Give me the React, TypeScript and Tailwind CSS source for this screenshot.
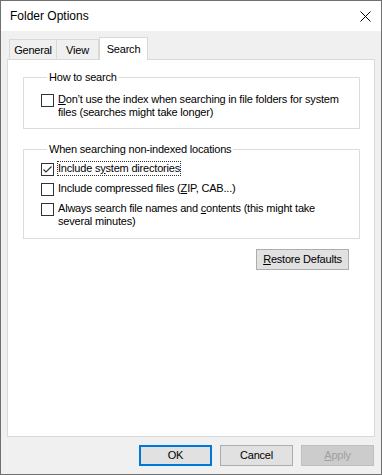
import { useState } from 'react';

type option = {
  id: string;
  label: React.ReactNode;
  checked: boolean;
  focused?: boolean;
};

const Checkbox = ({ checked }: { checked: boolean }) => (
  <span className="mt-[1px] flex h-[13px] w-[13px] shrink-0 items-center justify-center border border-[#333333] bg-white">
    {checked && (
      <svg width="11" height="11" viewBox="0 0 11 11">
        <path d="M1.5 5.5 L4 8 L9.5 2.5" fill="none" stroke="#333333" strokeWidth="1.2" />
      </svg>
    )}
  </span>
);

const Option = ({ option, onToggle }: { option: option; onToggle: () => void }) => (
  <div className="flex cursor-default items-start gap-[4px]" onClick={onToggle}>
    <Checkbox checked={option.checked} />
    <span
      className={
        option.focused
          ? 'outline outline-1 outline-dotted outline-[#333333] outline-offset-0'
          : ''
      }
    >
      {option.label}
    </span>
  </div>
);

const Button = ({
  children,
  variant = 'default',
  className = '',
}: {
  children: React.ReactNode;
  variant?: 'default' | 'focused' | 'disabled';
  className?: string;
}) => {
  const styles = {
    default: 'border border-[#adadad] bg-[#e1e1e1] text-black',
    focused: 'border-2 border-[#0078d7] bg-[#e1e1e1] text-black',
    disabled: 'border border-[#bfbfbf] bg-[#cccccc] text-[#a0a0a0]',
  };

  return (
    <button
      className={`flex h-[21px] items-center justify-center ${styles[variant]} ${className}`}
    >
      {children}
    </button>
  );
};

export default function App() {
  const [options, setOptions] = useState<option[]>([
    {
      id: 'system',
      label: (
        <>
          Include s<u>y</u>stem directories
        </>
      ),
      checked: true,
      focused: true,
    },
    {
      id: 'compressed',
      label: (
        <>
          Include compressed files (<u>Z</u>IP, CAB...)
        </>
      ),
      checked: false,
    },
    {
      id: 'contents',
      label: (
        <>
          Always search file names and <u>c</u>ontents (this might take
          <br />
          several minutes)
        </>
      ),
      checked: false,
    },
  ]);
  const [noIndex, setNoIndex] = useState(false);

  const toggle = (id: string) => {
    setOptions(options.map((o) => (o.id === id ? { ...o, checked: !o.checked } : o)));
  };

  return (
    <div className="flex h-[475px] w-[382px] flex-col border border-[#707070] bg-[#f0f0f0] font-['Liberation_Sans',Arial,sans-serif] text-[11px] leading-[13px] tracking-[-0.2px] text-black">
      {/* title bar */}
      <div className="flex h-[30px] items-center justify-between bg-white pl-[9px] pr-[10px]">
        <span className="text-[12px] tracking-normal">Folder Options</span>
        <svg width="11" height="11" viewBox="0 0 11 11">
          <path d="M0.5 0.5 L10.5 10.5 M10.5 0.5 L0.5 10.5" stroke="#000" strokeWidth="1" />
        </svg>
      </div>

      <div className="flex flex-1 flex-col px-[6px] pt-[6px]">
        {/* tabs */}
        <div className="flex h-[22px] items-end pl-[2px]">
          <div className="flex h-[20px] w-[48px] items-center justify-center border border-b-0 border-[#d9d9d9] pt-[2px]">
            General
          </div>
          <div className="flex h-[20px] w-[42px] items-center justify-center border border-b-0 border-l-0 border-[#d9d9d9] pt-[2px]">
            View
          </div>
          <div className="relative z-10 -mb-px flex h-[23px] w-[49px] items-center justify-center border border-b-0 border-[#d9d9d9] bg-white">
            Search
          </div>
        </div>

        {/* panel */}
        <div className="flex h-[378px] flex-col border border-[#d9d9d9] bg-white pl-[15px] pr-[14px]">
          <fieldset className="mt-[11px] border border-[#dcdcdc] pb-[9px] pl-[17px] pt-[9px]">
            <legend className="ml-[6px] px-[2px]">How to search</legend>
            <Option
              option={{
                id: 'noindex',
                label: (
                  <>
                    <u>D</u>on’t use the index when searching in file folders for system
                    <br />
                    files (searches might take longer)
                  </>
                ),
                checked: noIndex,
              }}
              onToggle={() => setNoIndex(!noIndex)}
            />
          </fieldset>

          <fieldset className="mt-[14px] flex flex-col gap-[6px] border border-[#dcdcdc] pb-[10px] pl-[17px] pt-[6px]">
            <legend className="ml-[6px] px-[2px]">When searching non-indexed locations</legend>
            {options.map((option) => (
              <Option key={option.id} option={option} onToggle={() => toggle(option.id)} />
            ))}
          </fieldset>

          <div className="mt-[10px] flex justify-end pr-[11px]">
            <Button className="w-[93px]">
              <span>
                <u>R</u>estore Defaults
              </span>
            </Button>
          </div>
        </div>

        {/* dialog buttons */}
        <div className="mt-[8px] flex justify-end gap-[8px] pr-[1px]">
          <Button variant="focused" className="w-[73px]">
            OK
          </Button>
          <Button className="w-[73px]">Cancel</Button>
          <Button variant="disabled" className="w-[73px]">
            <span>
              <u>A</u>pply
            </span>
          </Button>
        </div>
      </div>
    </div>
  );
}
